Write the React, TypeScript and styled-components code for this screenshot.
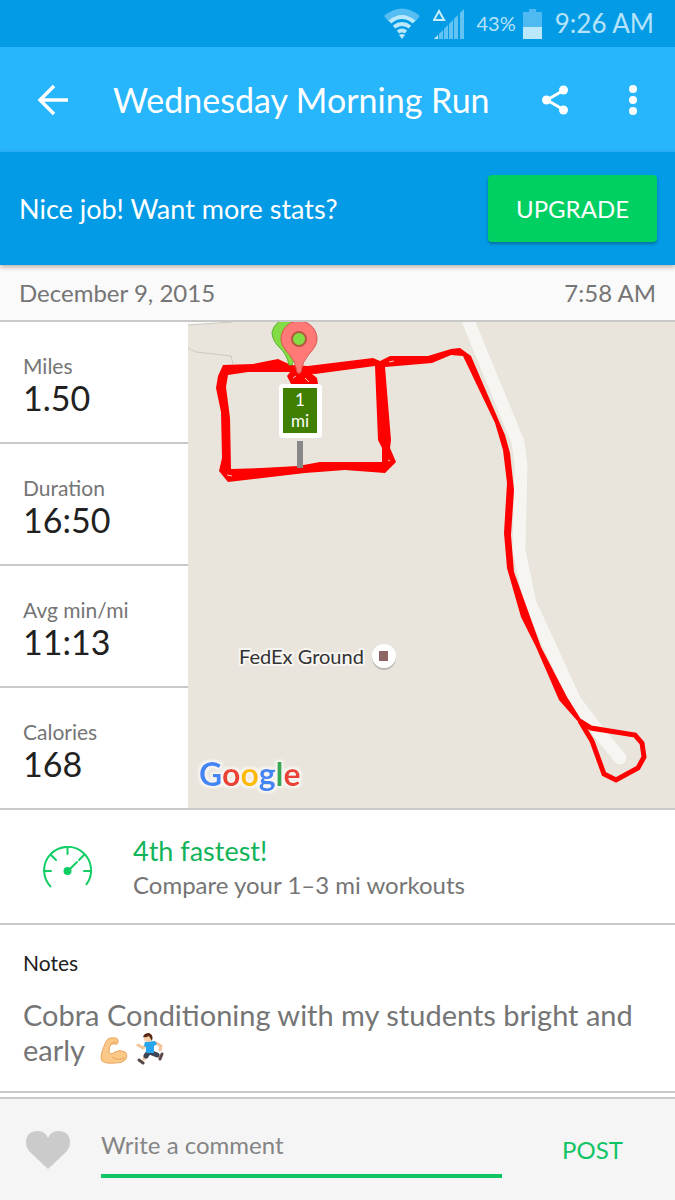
import React from "react";
import styled, { createGlobalStyle } from "styled-components";

const GlobalStyle = createGlobalStyle`
  * { box-sizing: border-box; }
  body {
    margin: 0;
    background: #fff;
    color: #757575;
    font-family: Lato, "Noto Sans", sans-serif;
    font-size: 24px;
    line-height: 32px;
  }
  h1, h2, p, dl, dt, dd { margin: 0; font-weight: 400; }
  button, input { font: inherit; }
  button { border: 0; padding: 0; cursor: pointer; }
  svg { display: block; flex: none; }
`;

const line = "#c9c9c9";
const green = "#00d062";

const Page = styled.div`
  min-height: 100vh;
  display: flex;
  flex-direction: column;
`;

const StatusBar = styled.div`
  height: 47px;
  padding: 0 21px;
  display: flex;
  align-items: center;
  justify-content: flex-end;
  background: #039be6;
  color: #b5e3fa;
`;

const Percent = styled.span`
  margin: 0 7px 0 11px;
  font-size: 20px;
  line-height: 47px;
`;

const Clock = styled.span`
  margin-left: 13px;
  font-size: 26px;
  line-height: 47px;
`;

const SignalIcon = styled.svg`
  margin-left: 13px;
`;

const AppBar = styled.header`
  height: 105px;
  padding: 0 18px 0 29px;
  display: flex;
  align-items: center;
  background: #27b5fc;
  color: #fff;
`;

const Title = styled.h1`
  flex: 1;
  margin-left: 36px;
  font-size: 34px;
  line-height: 48px;
  white-space: nowrap;
`;

const IconButton = styled.button<{ $gap?: number }>`
  width: 48px;
  height: 48px;
  margin-left: ${(p) => p.$gap ?? 0}px;
  display: flex;
  align-items: center;
  justify-content: center;
  background: none;
  color: inherit;
`;

const Banner = styled.section`
  position: relative;
  height: 113px;
  padding: 0 18px 0 19px;
  display: flex;
  align-items: center;
  justify-content: space-between;
  background: #039be6;
  color: #fff;
  font-size: 27px;
  box-shadow: 0 2px 5px rgba(60, 20, 20, 0.35);
`;

const UpgradeButton = styled.button`
  width: 169px;
  height: 67px;
  border-radius: 4px;
  background: ${green};
  color: #fff;
  font-size: 24px;
  box-shadow: 0 2px 3px rgba(0, 0, 0, 0.3);
`;

const DateRow = styled.div`
  height: 57px;
  padding: 0 19px;
  display: flex;
  align-items: center;
  justify-content: space-between;
  background: #fafafa;
  border-bottom: 2px solid ${line};
`;

const Overview = styled.section`
  display: grid;
  grid-template-columns: 188px minmax(0, 1fr);
  border-bottom: 2px solid ${line};
`;

const Stats = styled.dl`
  display: flex;
  flex-direction: column;
`;

const Stat = styled.div`
  flex: 1;
  padding: 8px 23px 0;
  display: flex;
  flex-direction: column;
  justify-content: center;
  border-bottom: 2px solid ${line};
  &:last-child { border-bottom: 0; }
`;

const StatLabel = styled.dt`
  font-size: 21px;
  line-height: 24px;
`;

const StatValue = styled.dd`
  color: #212121;
  font-size: 34px;
  line-height: 40px;
`;

const MapDrawing = styled.svg`
  width: 100%;
  height: 100%;
`;

const Achievement = styled.section`
  height: 115px;
  padding: 2px 42px 0;
  display: flex;
  align-items: center;
  gap: 40px;
  border-bottom: 2px solid ${line};
`;

const AchievementTitle = styled.h2`
  color: #12b45a;
  font-size: 27px;
  line-height: 34px;
`;

const AchievementText = styled.p`
  line-height: 34px;
`;

const Notes = styled.section`
  flex: 1;
  padding: 22px 23px 23px;
  border-bottom: 2px solid ${line};
`;

const NotesTitle = styled.h2`
  margin-bottom: 18px;
  color: #212121;
  font-size: 21px;
  line-height: 32px;
`;

const NotesText = styled.p`
  font-size: 29px;
  line-height: 35px;
  svg {
    display: inline-block;
    margin-left: 7px;
    vertical-align: -4px;
  }
`;

const CommentBar = styled.form`
  height: 103px;
  margin-top: 4px;
  padding: 0 27px 0 26px;
  display: flex;
  align-items: center;
  background: #f5f5f5;
  border-top: 2px solid ${line};
`;

const LikeButton = styled.button`
  background: none;
`;

const CommentInput = styled.input`
  flex: 1;
  min-width: 0;
  height: 56px;
  margin: 0 35px 0 31px;
  padding: 0 0 6px;
  border: 0;
  border-bottom: 4px solid #10c463;
  border-radius: 0;
  outline: 0;
  background: none;
  color: #212121;
  &::placeholder { color: #858585; opacity: 1; }
`;

const PostButton = styled.button`
  width: 111px;
  height: 48px;
  background: none;
  color: #10c463;
`;

function Wifi() {
  return (
    <svg width="36" height="32" viewBox="0 0 36 32" aria-hidden="true">
      <path d="M0 8Q18 -7 36 8L31 14Q18 3 5 14Z" fill="#55bdf2" />
      <g fill="none" stroke="#bce8fb" strokeWidth="4">
        <path d="M6 14Q18 4 30 14" />
        <path d="M10 19Q18 13 26 19" />
        <path d="M14 24Q18 21 22 24" />
      </g>
      <path d="M15 27Q18 25 21 27L18 31Z" fill="#bce8fb" />
    </svg>
  );
}

function Signal() {
  return (
    <SignalIcon width="32" height="32" viewBox="0 0 32 32" aria-hidden="true">
      <path d="M6 3L11 12H1Z" fill="none" stroke="#c9edfc" strokeWidth="2" />
      <path d="M1 31L5 27V31Z" fill="#c9edfc" />
      <path
        d="M6 31V26L10 22V31ZM11 31V21L15 17V31ZM16 31V16L20 12V31ZM21 31V11L25 7V31ZM27 31V5L31 1V31Z"
        fill="#63c4f4"
      />
    </SignalIcon>
  );
}

function Battery() {
  return (
    <svg width="19" height="30" viewBox="0 0 19 30" aria-hidden="true">
      <path d="M6 0H13V3H19V18H0V3H6Z" fill="#4fbaf1" />
      <path d="M0 18H19V30H0Z" fill="#bce8fb" />
    </svg>
  );
}

function Gauge() {
  return (
    <svg width="51" height="44" viewBox="0 0 51 44" fill="none" stroke="#10cd64" strokeWidth="2" aria-hidden="true">
      <path d="M9 41A23.500 23.500 0 1 1 44 39" />
      <path d="M2 25H9M49 25H42M25.500 2V8M9 9L14 14M42 9L37 14M26 25L35 16" strokeLinecap="round" />
      <circle cx="25.500" cy="25" r="3" fill="#10cd64" />
    </svg>
  );
}

function Biceps() {
  return (
    <svg width="30" height="28" viewBox="0 0 30 28" role="img" aria-label="flexed biceps">
      <path
        d="M9 2Q12 0 17 1Q20 2 19 6Q18 8 15 7L12 7Q10 10 10 16Q13 18 16 15Q21 12 26 15Q29 17 27 22Q24 26 16 26Q7 27 3 24Q1 21 3 15Q6 5 9 2Z"
        fill="#fcc887"
        stroke="#e8a65e"
      />
      <path d="M12 7Q14 5 17 5M13 20Q18 24 26 21" fill="none" stroke="#e8a45a" />
    </svg>
  );
}

function Runner() {
  return (
    <svg width="28" height="32" viewBox="0 0 28 32" role="img" aria-label="runner">
      <g fill="none" strokeLinecap="round" strokeLinejoin="round">
        <path d="M11 11L7 15L2 12M20 10L25 13L24 17M10 22L8 26M20 22L24 24" stroke="#f3c39a" strokeWidth="3" />
        <path d="M12 20L10 23M16 20L21 22" stroke="#3c4455" strokeWidth="5" />
        <path d="M3 27L7 30M26 21L24 26" stroke="#5c4a4a" strokeWidth="3" />
      </g>
      <path d="M9 9L19 8L21 11L18 13V20H10V14L8 13Z" fill="#27a5ee" />
      <circle cx="12" cy="5" r="4" fill="#fad0a8" />
      <path d="M7 4Q8 0 13 0Q18 2 16 8Q14 5 13 3Q10 5 7 4Z" fill="#5a2c16" />
    </svg>
  );
}

const sans = "Lato, sans-serif";

function RouteMap() {
  return (
    <MapDrawing viewBox="0 0 487 486" preserveAspectRatio="xMidYMid slice" role="img" aria-label="Map of the run">
      <defs>
        <filter id="halo" x="-10%" y="-20%" width="120%" height="140%">
          <feMorphology in="SourceAlpha" operator="dilate" radius="2" result="wide" />
          <feGaussianBlur in="wide" stdDeviation="1" result="soft" />
          <feFlood floodColor="#f8f6f2" />
          <feComposite in2="soft" operator="in" result="edge" />
          <feMerge>
            <feMergeNode in="edge" />
            <feMergeNode in="SourceGraphic" />
          </feMerge>
        </filter>
      </defs>
      <rect width="487" height="486" fill="#e9e5dc" />
      <path d="M0 0H45L0 3Z" fill="#faf9f7" />
      <path d="M0 3L45 0M0 26L8 30L43 34L45 42" fill="none" stroke="#ccc9bf" />

      <g fill="none" strokeLinecap="round" strokeLinejoin="round">
        <path d="M279 -4L330 120L333 143L331 228L342 281L387 379L409 408L432 436" stroke="#e4e1d9" strokeWidth="14" />
        <path d="M279 -4L330 120L333 143L331 228L342 281L387 379L409 408L432 436" stroke="#f7f5f1" strokeWidth="13" />
      </g>

      <g fill="#fe0000">
        <path
          fillRule="evenodd"
          d="M35 43L65 42L90 37L103 43L120 44L185 36L192 39L202 34L240 34L263 27L272 26L283 34L317 113L322 131L326 168L323 213L326 250L353 325L379 375L394 399L393 403L371 378L348 325L333 295L319 246L316 211L319 161L315 128L307 101L275 34L263 33L244 41L197 45L203 118L202 126L208 140L197 151L157 148L117 151L40 160L31 149L34 136L33 90L28 66L30 54ZM40 53L60 50L100 50L127 52L187 44L190 118L194 126V140L132 140L110 144L73 146L43 147L42 96L38 65Z"
        />
        <path d="M103 49L99 54L103 62H130L129 56L123 51Z" />
      </g>
      <path d="M105 56L108 54M117 56L121 60M201 40L206 39M39 153L44 154M200 138L202 139" stroke="#f7c9c0" fill="none" />
      <path
        d="M392 399L403 406L447 413L454 421L456 435L450 446L428 458L416 452L404 419Z"
        fill="none"
        stroke="#fe0000"
        strokeWidth="5"
      />

      <path d="M84 10A18 18 0 0 1 119 10Q119 20 109 30L104 43H101Q99 32 91 25Q84 18 84 10Z" fill="#83dc43" stroke="#5bb030" />
      <path
        d="M93 17A18 18 0 1 1 129 17Q129 24 121 32Q114 40 113 50Q111 53 109 50Q108 40 101 32Q93 24 93 17Z"
        fill="#ff7a76"
        stroke="#d95552"
      />
      <circle cx="111" cy="17" r="7" fill="#83dc43" stroke="#b3593f" strokeWidth="2" />

      <rect x="109" y="119" width="6" height="27" fill="#888" />
      <rect x="91" y="62" width="43" height="54" rx="4" fill="#fff" />
      <rect x="95" y="66" width="34" height="45" fill="#417f02" />
      <g fill="#fff" fontFamily={sans} fontSize="17" textAnchor="middle">
        <text x="112" y="84">1</text>
        <text x="112" y="105">mi</text>
      </g>

      <text
        x="51"
        y="342"
        fill="#333"
        fontFamily={sans}
        fontSize="20"
        stroke="#f8f6f2"
        strokeWidth="4"
        strokeLinejoin="round"
        paintOrder="stroke"
      >
        FedEx Ground
      </text>
      <circle cx="196" cy="336" r="12" fill="#bdb9b1" />
      <circle cx="196" cy="334" r="12" fill="#fff" />
      <rect x="191" y="329" width="9" height="10" fill="#8d6663" />

      <text x="11" y="464" fontFamily={sans} fontSize="32" fontWeight="700" filter="url(#halo)">
        <tspan fill="#4285f4">G</tspan>
        <tspan fill="#ea4335">o</tspan>
        <tspan fill="#fbbc05">o</tspan>
        <tspan fill="#4285f4">g</tspan>
        <tspan fill="#34a853">l</tspan>
        <tspan fill="#ea4335">e</tspan>
      </text>
    </MapDrawing>
  );
}

const stats = [
  { label: "Miles", value: "1.50" },
  { label: "Duration", value: "16:50" },
  { label: "Avg min/mi", value: "11:13" },
  { label: "Calories", value: "168" },
];

export default function App() {
  return (
    <Page>
      <GlobalStyle />
      <StatusBar>
        <Wifi />
        <Signal />
        <Percent>43%</Percent>
        <Battery />
        <Clock>9:26 AM</Clock>
      </StatusBar>
      <AppBar>
        <IconButton type="button" aria-label="Back">
          <svg width="32" height="32" viewBox="0 0 32 32" fill="none" stroke="currentColor" strokeWidth="3.500">
            <path d="M31 16H4M17 2L3 16L17 30" />
          </svg>
        </IconButton>
        <Title>Wednesday Morning Run</Title>
        <IconButton type="button" aria-label="Share">
          <svg width="28" height="30" viewBox="0 0 28 30" fill="currentColor">
            <path d="M23 5L6 15L23 25" fill="none" stroke="currentColor" strokeWidth="3" />
            <circle cx="22.500" cy="5" r="4.500" />
            <circle cx="5.500" cy="15" r="4.500" />
            <circle cx="22.500" cy="25" r="4.500" />
          </svg>
        </IconButton>
        <IconButton type="button" aria-label="More options" $gap={30}>
          <svg width="10" height="32" viewBox="0 0 10 32" fill="currentColor">
            <circle cx="5" cy="5" r="4" />
            <circle cx="5" cy="16" r="4" />
            <circle cx="5" cy="27" r="4" />
          </svg>
        </IconButton>
      </AppBar>
      <Banner>
        <p>Nice job! Want more stats?</p>
        <UpgradeButton type="button">UPGRADE</UpgradeButton>
      </Banner>
      <DateRow>
        <span>December 9, 2015</span>
        <span>7:58 AM</span>
      </DateRow>
      <Overview>
        <Stats>
          {stats.map((s) => (
            <Stat key={s.label}>
              <StatLabel>{s.label}</StatLabel>
              <StatValue>{s.value}</StatValue>
            </Stat>
          ))}
        </Stats>
        <RouteMap />
      </Overview>
      <Achievement>
        <Gauge />
        <div>
          <AchievementTitle>4th fastest!</AchievementTitle>
          <AchievementText>Compare your 1–3 mi workouts</AchievementText>
        </div>
      </Achievement>
      <Notes>
        <NotesTitle>Notes</NotesTitle>
        <NotesText>
          Cobra Conditioning with my students bright and early <Biceps />
          <Runner />
        </NotesText>
      </Notes>
      <CommentBar onSubmit={(e) => e.preventDefault()}>
        <LikeButton type="button" aria-label="Like">
          <svg width="44" height="38" viewBox="0 0 44 38">
            <path
              d="M22 38L5 22Q0 17 0 12Q0 0 12 0Q19 0 22 7Q25 0 32 0Q44 0 44 12Q44 17 39 22Z"
              fill="#cbcbcb"
            />
          </svg>
        </LikeButton>
        <CommentInput type="text" placeholder="Write a comment" aria-label="Write a comment" />
        <PostButton type="submit">POST</PostButton>
      </CommentBar>
    </Page>
  );
}
